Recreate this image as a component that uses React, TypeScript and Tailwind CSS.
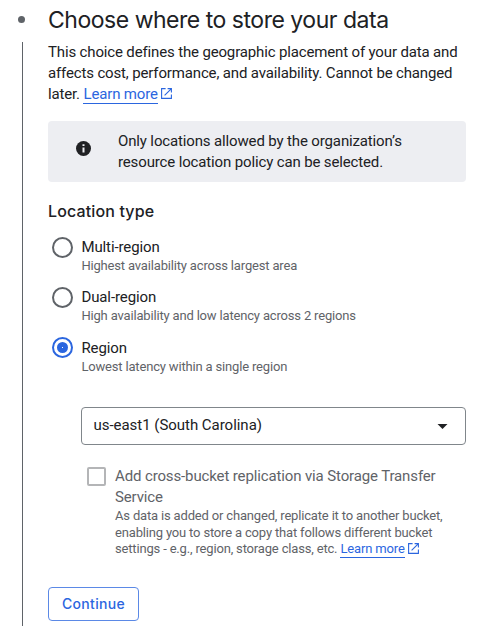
import React from "react";

function ExternalIcon({ className }: { className: string }) {
  return (
    <svg viewBox="0 0 11 11" className={className} fill="none" stroke="currentColor" strokeWidth="1.1">
      <path d="M4.6.6H.6v9.8h9.8V6.4M6.6.6h3.8v3.8M10.2.8 3.6 7.4" />
    </svg>
  );
}

type OptionProps = { label: string; hint: string; selected?: boolean };

function Option({ label, hint, selected = false }: OptionProps) {
  return (
    <label className="flex h-[50px] items-start">
      <span
        className={`ml-1 mt-px flex size-[21px] shrink-0 items-center justify-center rounded-full border-2 ${
          selected ? "border-[#2b66df]" : "border-[#5f6368]"
        }`}
      >
        {selected && (
          <span className="flex size-[11px] items-center justify-center rounded-full bg-[#2b66df]">
            <span className="size-px bg-white" />
          </span>
        )}
      </span>
      <span className={`ml-[8.4px] flex flex-col whitespace-nowrap ${selected ? "pt-0.5" : "pt-px"}`}>
        <span className="text-[15px] leading-[21px] tracking-[-0.1px]">{label}</span>
        <span className="-mt-px text-[13px] leading-[17px] tracking-[-0.17px] text-[#5f6368]">{hint}</span>
      </span>
    </label>
  );
}

export default function App() {
  return (
    <main className="flex h-[626px] w-[496px] overflow-hidden bg-white font-['Roboto',sans-serif] text-[#202124]">
      <div className="flex w-12 shrink-0 flex-col">
        <div className="ml-[18px] mt-4 size-[7px] rounded-full bg-[#5f6368]" />
        <div className="ml-[22px] mt-[19px] w-px flex-1 bg-[#5f6368]" />
      </div>

      <div className="flex w-[418px] flex-col">
        <h1 className="mt-1 h-[38px] whitespace-nowrap font-['Inter',sans-serif] text-[23px] leading-8 tracking-[-0.48px]">
          Choose where to store your data
        </h1>
        <p className="whitespace-nowrap text-[15px] leading-[21px] tracking-[-0.15px]">
          This choice defines the geographic placement of your data and
          <br />
          affects cost, performance, and availability. Cannot be changed
          <br />
          later.{" "}
          <a className="inline-block h-[20px] border-b border-[#2b66df] text-[#2b66df]">Learn more</a>
          <ExternalIcon className="ml-[3px] inline size-[11px] align-[0px] text-[#2b66df]" />
        </p>

        <div className="mt-4 flex h-[61px] items-center rounded-[4px] bg-[#edeef2]">
          <svg viewBox="0 0 15 15" className="ml-7 mt-[-6px] size-[15px] shrink-0">
            <circle cx="7.5" cy="7.5" r="7.5" fill="#202124" />
            <path d="M6.5 3.2h2v1.9h-2zM6.5 6.4h2v5h-2z" fill="#edeef2" />
          </svg>
          <p className="ml-[27px] whitespace-nowrap text-[15px] leading-[21px] tracking-[-0.14px]">
            Only locations allowed by the organization’s
            <br />
            resource location policy can be selected.
          </p>
        </div>

        <h2 className="mt-[17px] h-[25px] whitespace-nowrap font-['Inter',sans-serif] text-[16px] font-medium leading-6 tracking-[0.13px]">
          Location type
        </h2>

        <div className="mt-3 flex flex-col">
          <Option label="Multi-region" hint="Highest availability across largest area" />
          <Option label="Dual-region" hint="High availability and low latency across 2 regions" />
          <Option label="Region" hint="Lowest latency within a single region" selected />
        </div>

        <div className="ml-[33px] mt-[21px] flex h-[38px] items-center justify-between rounded-[4px] border border-[#80868b] pl-[11.5px] pr-[17px]">
          <span className="mb-0.5 text-[15px] leading-5 tracking-[-0.03px]">us-east1 (South Carolina)</span>
          <svg viewBox="0 0 10 5" className="h-[5px] w-[11px]" fill="#202124">
            <path d="M0 0h10L5 5z" />
          </svg>
        </div>

        <div className="ml-[39px] mt-[21px] flex h-[121px] items-start text-[#5f6368]">
          <span className="mt-px size-[19px] shrink-0 rounded-[2px] border-2 border-[#b4b5b7]" />
          <div className="ml-[9px] whitespace-nowrap">
            <p className="text-[15px] leading-[21px] tracking-[-0.13px]">
              Add cross-bucket replication via Storage Transfer
              <br />
              Service
            </p>
            <p className="text-[13px] leading-[16.5px] tracking-[-0.17px]">
              As data is added or changed, replicate it to another bucket,
              <br />
              <span>enabling you to store a copy that follows different bucket</span>
              <br />
              settings - e.g., region, storage class, etc.{" "}
              <a className="inline-block h-[17px] border-b border-[#2b66df] tracking-[-0.15px] text-[#2b66df]">Learn more</a>
              <ExternalIcon className="ml-[3px] inline size-[11px] align-[-1px] text-[#2b66df]" />
            </p>
          </div>
        </div>

        <button className="flex h-[34px] w-[91px] items-center justify-center rounded-[4px] border border-[#5b89e6] pb-0.5 font-['Inter',sans-serif] text-[14px] font-medium tracking-[0.3px] text-[#2b66df]">
          Continue
        </button>
      </div>
    </main>
  );
}
